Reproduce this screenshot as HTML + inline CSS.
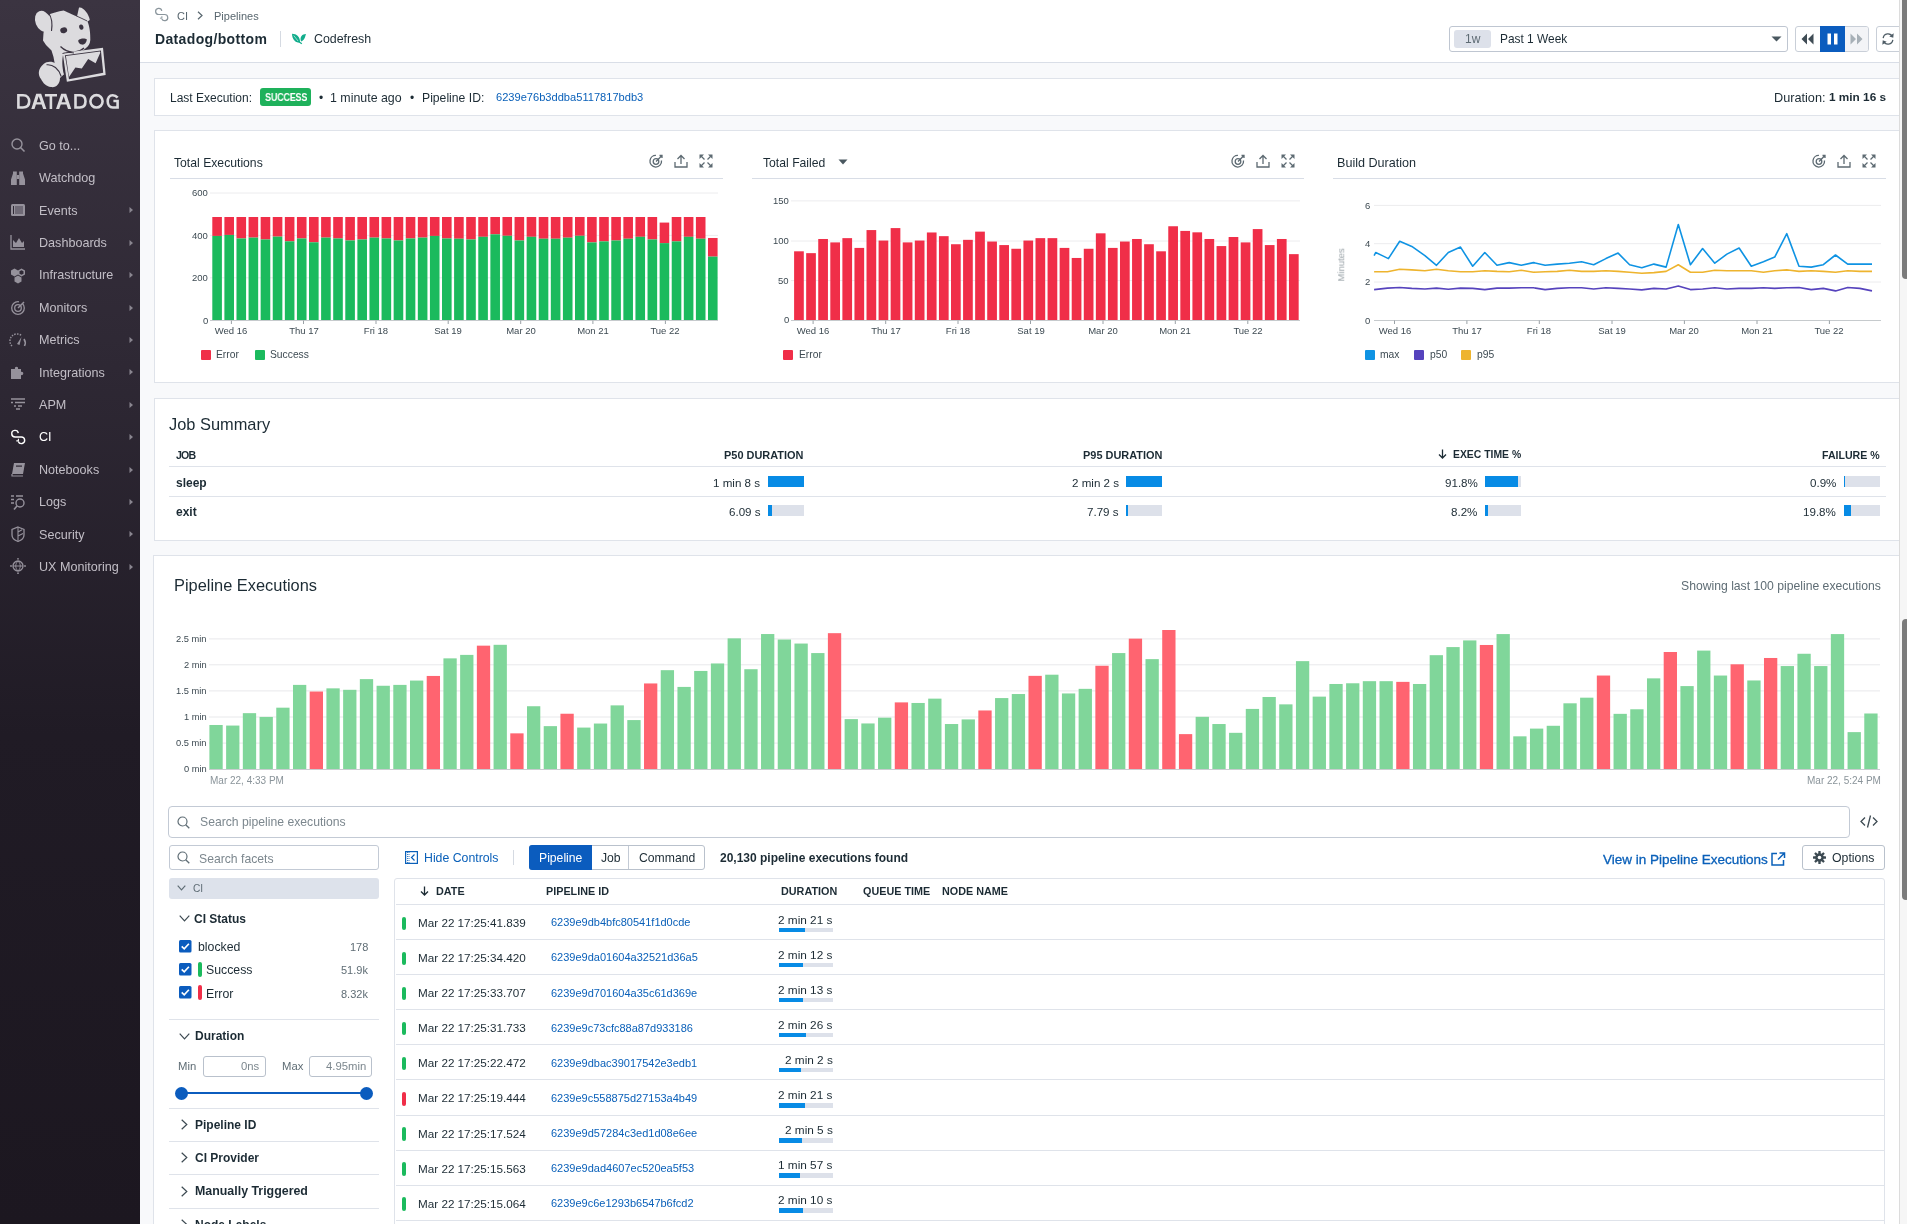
<!DOCTYPE html><html><head><meta charset="utf-8"><style>
*{box-sizing:border-box}
html,body{margin:0;padding:0}
body{width:1907px;height:1224px;overflow:hidden;position:relative;background:#f8f9fb;font-family:"Liberation Sans", sans-serif;color:#1c2b34}
.t{position:absolute;white-space:nowrap;line-height:1;will-change:transform}
svg{position:absolute;overflow:visible}

</style></head><body>
<div style="position:absolute;left:0;top:0;width:140px;height:1224px;background:linear-gradient(180deg,#3b3441 0%,#2e2834 30%,#201b25 60%,#1c1720 100%)"></div>
<svg style="left:0;top:0" width="140" height="120" viewBox="0 0 140 120">
<path fill="#dcdbde" d="M50,14 L55,12.5 L59.5,11.2 L63.7,10.4 L68,12.5 L74.5,15.5 L77,16.5 L79,7.6 C83,6.5 89,14 89.8,20 L87.5,21.5 C89.5,26 90.5,33 90.3,40 C90,44 88.5,46 86,48 C84,50 82,51 80,51.5 L73,54 L63,55 C62,60 62,66 63.8,74.5 L59,77 C57,73 55,66 53.5,57 L51.5,50.5 L47.5,46.5 L46,45 L43,40.5 L43.5,33 L44.5,28 Z"/>
<path d="M76.5,16 C80,17.5 84,19.5 87.2,21" stroke="#3b3441" stroke-width="0.9" fill="none"/>
<ellipse cx="43.2" cy="21.3" rx="7.8" ry="10.8" transform="rotate(-22 43.2 21.3)" fill="#dcdbde"/>
<path d="M48.6,13 C51.5,17 52.5,24 51.5,31" stroke="#3b3441" stroke-width="1.1" fill="none"/>
<path fill="#dcdbde" d="M43.6,64 C47,61 52,61 56,63.5 L59.5,63.7 L63.7,74.4 L60,78 C60,84 56,88 51,87 C46,86.5 43,83 41,79 C38,75 37.5,69 43.6,64 Z"/>
<path d="M46.5,64.8 C53,64 59,69 61.2,76.5" stroke="#3b3441" stroke-width="1.1" fill="none"/>
<ellipse cx="63.7" cy="30.3" rx="3.5" ry="2.9" transform="rotate(-12 63.7 30.3)" fill="#3b3441"/>
<ellipse cx="81.3" cy="27.1" rx="2.1" ry="2.7" transform="rotate(-15 81.3 27.1)" fill="#3b3441"/>
<path d="M78.2,40.4 C80,38.2 85,38 86.8,39.2 C86.6,42.6 84.3,45 82,44.6 C80,44.2 78,42.3 78.2,40.4 Z" fill="#3b3441"/>
<path d="M60.5,46.5 C65,51 70,52.5 75,52 C79,51.5 82,50 84,48" stroke="#3b3441" stroke-width="1.3" fill="none"/>
<path fill="#dcdbde" d="M62.7,53.1 L103,47.8 L105.7,74.9 L66.9,81.8 Z"/>
<path fill="#3b3441" d="M64.9,55.2 L100.9,50.4 L103.2,72.7 L69,79.3 Z"/>
<path fill="#dcdbde" d="M65.9,56.1 L100,51.4 L100.3,52.8 L95.6,63.2 L88.2,59 L81.8,68.5 L75.4,67.5 L69,77 Z"/>
<path d="M62.5,53.5 C66,52.5 70,52 74,53" stroke="#3b3441" stroke-width="1" fill="none"/>
</svg>
<svg style="left:0;top:0" width="140" height="120" viewBox="0 0 140 120"><g fill="none" stroke="#dcdbde" stroke-width="2.6" stroke-linejoin="miter">
<path d="M18.4,95.2 L23,95.2 C27.6,95.2 29.2,98.5 29.2,101.35 C29.2,104.5 27.6,107.5 23,107.5 L18.4,107.5 Z"/>
<path stroke="none" fill="#dcdbde" d="M31.3,109 L36.2,93.7 L41.2,93.7 L46.4,109 L43.2,109 L38.7,96.3 L34.5,109 Z M36.2,102.2 L41.4,102.2 L41.9,104.6 L35.4,104.6 Z"/>
<path d="M44.9,95.2 L57,95.2 M50.9,95.2 L50.9,109"/>
<path stroke="none" fill="#dcdbde" d="M56,109 L61.2,93.7 L66.2,93.7 L71.2,109 L68,109 L63.7,96.3 L59.2,109 Z M61.2,102.2 L66.4,102.2 L66.9,104.6 L60.4,104.6 Z"/>
<path d="M75.5,95.2 L80,95.2 C84.7,95.2 85.5,98.5 85.5,101.35 C85.5,104.5 84.7,107.5 80,107.5 L75.5,107.5 Z"/>
<ellipse cx="96.5" cy="101.35" rx="6.1" ry="6.2"/>
<path d="M117.6,97.6 C116.2,95.9 114.6,95.2 112.7,95.2 C109.4,95.2 107.7,98 107.7,101.35 C107.7,105 109.7,107.5 112.7,107.5 L117.6,107.5 L117.6,101 L113.4,101"/>
</g></svg>
<div class="t " style="left:39.0px;top:139.8px;font-size:12.6px;font-weight:400;color:#c2bec6;">Go to...</div>
<div class="t " style="left:39.0px;top:172.2px;font-size:12.6px;font-weight:400;color:#c2bec6;">Watchdog</div>
<div class="t " style="left:39.0px;top:204.6px;font-size:12.6px;font-weight:400;color:#c2bec6;">Events</div>
<svg style="left:129px;top:206.3px" width="5" height="8"><path d="M0.5,1 L4,4 L0.5,7 Z" fill="#8a8690"/></svg>
<div class="t " style="left:39.0px;top:237.0px;font-size:12.6px;font-weight:400;color:#c2bec6;">Dashboards</div>
<svg style="left:129px;top:238.7px" width="5" height="8"><path d="M0.5,1 L4,4 L0.5,7 Z" fill="#8a8690"/></svg>
<div class="t " style="left:39.0px;top:269.4px;font-size:12.6px;font-weight:400;color:#c2bec6;">Infrastructure</div>
<svg style="left:129px;top:271.1px" width="5" height="8"><path d="M0.5,1 L4,4 L0.5,7 Z" fill="#8a8690"/></svg>
<div class="t " style="left:39.0px;top:301.8px;font-size:12.6px;font-weight:400;color:#c2bec6;">Monitors</div>
<svg style="left:129px;top:303.5px" width="5" height="8"><path d="M0.5,1 L4,4 L0.5,7 Z" fill="#8a8690"/></svg>
<div class="t " style="left:39.0px;top:334.2px;font-size:12.6px;font-weight:400;color:#c2bec6;">Metrics</div>
<svg style="left:129px;top:335.9px" width="5" height="8"><path d="M0.5,1 L4,4 L0.5,7 Z" fill="#8a8690"/></svg>
<div class="t " style="left:39.0px;top:366.6px;font-size:12.6px;font-weight:400;color:#c2bec6;">Integrations</div>
<svg style="left:129px;top:368.3px" width="5" height="8"><path d="M0.5,1 L4,4 L0.5,7 Z" fill="#8a8690"/></svg>
<div class="t " style="left:39.0px;top:399.0px;font-size:12.6px;font-weight:400;color:#c2bec6;">APM</div>
<svg style="left:129px;top:400.7px" width="5" height="8"><path d="M0.5,1 L4,4 L0.5,7 Z" fill="#8a8690"/></svg>
<div class="t " style="left:39.0px;top:431.4px;font-size:12.6px;font-weight:400;color:#ffffff;">CI</div>
<svg style="left:129px;top:433.1px" width="5" height="8"><path d="M0.5,1 L4,4 L0.5,7 Z" fill="#8a8690"/></svg>
<div class="t " style="left:39.0px;top:463.8px;font-size:12.6px;font-weight:400;color:#c2bec6;">Notebooks</div>
<svg style="left:129px;top:465.5px" width="5" height="8"><path d="M0.5,1 L4,4 L0.5,7 Z" fill="#8a8690"/></svg>
<div class="t " style="left:39.0px;top:496.2px;font-size:12.6px;font-weight:400;color:#c2bec6;">Logs</div>
<svg style="left:129px;top:497.9px" width="5" height="8"><path d="M0.5,1 L4,4 L0.5,7 Z" fill="#8a8690"/></svg>
<div class="t " style="left:39.0px;top:528.6px;font-size:12.6px;font-weight:400;color:#c2bec6;">Security</div>
<svg style="left:129px;top:530.3px" width="5" height="8"><path d="M0.5,1 L4,4 L0.5,7 Z" fill="#8a8690"/></svg>
<div class="t " style="left:39.0px;top:561.0px;font-size:12.6px;font-weight:400;color:#c2bec6;">UX Monitoring</div>
<svg style="left:129px;top:562.7px" width="5" height="8"><path d="M0.5,1 L4,4 L0.5,7 Z" fill="#8a8690"/></svg>
<svg style="left:9.5px;top:137.2px" width="16" height="16" viewBox="0 0 16 16"><circle cx="7" cy="7" r="5" fill="none" stroke="#96929c" stroke-width="1.4"/><path d="M10.5,10.5 L14.5,14.5" stroke="#96929c" stroke-width="1.6"/></svg>
<svg style="left:9.5px;top:169.6px" width="16" height="16" viewBox="0 0 16 16"><path d="M1,15 L1,9.5 L3,3.5 L3,1.5 L6.8,1.5 L6.8,15 Z M9.2,15 L9.2,1.5 L13,1.5 L13,3.5 L15,9.5 L15,15 Z" fill="#96929c"/><rect x="6.8" y="5" width="2.4" height="4" fill="#96929c"/></svg>
<svg style="left:9.5px;top:202.0px" width="16" height="16" viewBox="0 0 16 16"><rect x="1" y="2" width="14" height="12" rx="1.5" fill="#96929c"/><rect x="3" y="4" width="1" height="8" fill="#2f2935"/><rect x="5" y="4" width="8" height="8" fill="#6f6a76"/></svg>
<svg style="left:9.5px;top:234.4px" width="16" height="16" viewBox="0 0 16 16"><path d="M1,1 L1,15 L15,15" stroke="#96929c" stroke-width="1.3" fill="none"/><path d="M3,13 L3,6 L6,9 L9,4 L12,9 L14,7 L14,13 Z" fill="#96929c"/></svg>
<svg style="left:9.5px;top:266.8px" width="16" height="16" viewBox="0 0 16 16"><path d="M4.5,1.5 L8,3.5 L8,7.5 L4.5,9.5 L1,7.5 L1,3.5 Z M11.5,1.5 L15,3.5 L15,7.5 L11.5,9.5 L8,7.5 L8,3.5 Z" fill="#96929c"/><path d="M11.5,3.2 L13.5,4.3 L13.5,6.7 L11.5,7.8 L9.5,6.7 L9.5,4.3 Z" fill="#2f2935"/><path d="M8,8.5 L11.5,10.5 L11.5,14.5 L8,16.5 L4.5,14.5 L4.5,10.5 Z" fill="#96929c"/></svg>
<svg style="left:9.5px;top:299.2px" width="16" height="16" viewBox="0 0 16 16"><circle cx="8" cy="9" r="6.3" fill="none" stroke="#96929c" stroke-width="1.3" stroke-dasharray="30 4"/><circle cx="8" cy="9" r="3.3" fill="none" stroke="#96929c" stroke-width="1.3"/><path d="M8,9 L14,3" stroke="#96929c" stroke-width="1.4"/></svg>
<svg style="left:9.5px;top:331.6px" width="16" height="16" viewBox="0 0 16 16"><path d="M2,14 A7,7 0 0 1 12,4" fill="none" stroke="#96929c" stroke-width="1.4" stroke-dasharray="1.5 1.2"/><path d="M14,7 A7,7 0 0 1 14.5,14" fill="none" stroke="#96929c" stroke-width="1.6"/><path d="M7,12 L11.5,5 L9.5,13 Z" fill="#96929c"/></svg>
<svg style="left:9.5px;top:364.0px" width="16" height="16" viewBox="0 0 16 16"><path d="M1,5 L5,5 C4,2 9,2 8,5 L11,5 L11,8 C14,7 14,12 11,11 L11,15 L1,15 Z" fill="#96929c"/></svg>
<svg style="left:9.5px;top:396.4px" width="16" height="16" viewBox="0 0 16 16"><path d="M1,3 L15,3 M1,6.5 L3,6.5 M5,6.5 L15,6.5 M4,10 L6,10 M8,10 L12,10 M6,13 L10,13" stroke="#96929c" stroke-width="1.3"/></svg>
<svg style="left:9.5px;top:428.8px" width="16" height="16" viewBox="0 0 16 16"><path d="M8.3,4.2 A3.3,3.3 0 1 0 5.1,8 L11.4,8 A3.3,3.3 0 1 1 8.3,12.5" stroke="#ffffff" stroke-width="1.4" fill="none"/><path d="M6.3,11.9 L8.4,11.9 L8.4,9.8" stroke="#ffffff" stroke-width="1.1" fill="none"/></svg>
<svg style="left:9.5px;top:461.2px" width="16" height="16" viewBox="0 0 16 16"><path d="M4,2 L15,2 L13,13 L2,13 Z" fill="#96929c"/><path d="M2,13 L2,15 L13,15" stroke="#96929c" stroke-width="1.2" fill="none"/><rect x="6" y="4.5" width="6" height="1.2" fill="#2a2430"/></svg>
<svg style="left:9.5px;top:493.6px" width="16" height="16" viewBox="0 0 16 16"><path d="M1,2 L4,2 M6,2 L13,2 M1,5.5 L4,5.5 M1,9 L4,9" stroke="#96929c" stroke-width="1.3"/><circle cx="10" cy="9" r="4" fill="none" stroke="#96929c" stroke-width="1.4"/><path d="M7,12 L4,15.5" stroke="#96929c" stroke-width="1.6"/></svg>
<svg style="left:9.5px;top:526.0px" width="16" height="16" viewBox="0 0 16 16"><path d="M8,1 L14,3.5 L14,9 C14,12 11,14.5 8,15.5 C5,14.5 2,12 2,9 L2,3.5 Z" fill="none" stroke="#96929c" stroke-width="1.3"/><path d="M8,1 L8,15.5 M8,6 L12,3.8 M8,10 L13,7.5" stroke="#96929c" stroke-width="1.1"/></svg>
<svg style="left:9.5px;top:558.4px" width="16" height="16" viewBox="0 0 16 16"><circle cx="8" cy="8" r="5" fill="none" stroke="#96929c" stroke-width="1.3"/><path d="M3,8 L13,8 M8,3 C5,6 5,10 8,13 C11,10 11,6 8,3" stroke="#96929c" stroke-width="1" fill="none"/><circle cx="8" cy="0.8" r="0.9" fill="#96929c"/><circle cx="8" cy="15.2" r="0.9" fill="#96929c"/><circle cx="1" cy="8" r="0.9" fill="#96929c"/><circle cx="15" cy="8" r="0.9" fill="#96929c"/></svg>
<div style="position:absolute;left:140px;top:0px;width:1759px;height:63px;background:#fff;border-bottom:1px solid #d9dee7"></div>
<svg style="left:154px;top:7px" width="15" height="15" viewBox="0 0 16 16"><path d="M8.3,4.2 A3.3,3.3 0 1 0 5.1,8 L11.4,8 A3.3,3.3 0 1 1 8.3,12.5" stroke="#8a959c" stroke-width="1.3" fill="none"/><path d="M6.3,11.9 L8.4,11.9 L8.4,9.8" stroke="#8a959c" stroke-width="1" fill="none"/></svg>
<div class="t " style="left:176.5px;top:10.9px;font-size:11px;font-weight:400;color:#58666e;">CI</div>
<svg style="left:197px;top:11px" width="7" height="9"><path d="M1,0.8 L5,4.5 L1,8.2" stroke="#58666e" stroke-width="1.2" fill="none"/></svg>
<div class="t " style="left:213.5px;top:10.9px;font-size:11px;font-weight:400;color:#58666e;">Pipelines</div>
<div class="t " style="left:155.0px;top:32.0px;font-size:14px;font-weight:700;color:#1c2b34;letter-spacing:0.35px">Datadog/bottom</div>
<div style="position:absolute;left:280px;top:31px;width:1px;height:16px;background:#d5dae2"></div>
<svg style="left:288px;top:29px" width="22" height="20" viewBox="0 0 22 20"><path d="M4,4.8 C8.5,4.8 12.3,8 12,13.6 C7.5,14 4.2,10.5 4,4.8 Z" fill="#12ad8c"/><path d="M5.8,6.6 L10,12" stroke="#fff" stroke-width="0.7" opacity="0.8"/><path d="M11.3,13 L13.8,14.8" stroke="#12ad8c" stroke-width="1.3"/><path d="M18,5.1 C14.2,5.1 11.6,7.8 13,12.5 C16.4,11.6 17.1,8 18,5.1 Z" fill="#12ad8c"/></svg>
<div class="t " style="left:313.5px;top:33.4px;font-size:12.4px;font-weight:400;color:#1c2b34;">Codefresh</div>
<div style="position:absolute;left:1449px;top:26px;width:339px;height:26px;background:#fff;border:1px solid #bfc6d1;border-radius:3px"></div>
<div style="position:absolute;left:1453.5px;top:30px;width:37px;height:18px;background:#dde1ea;border-radius:3px"></div>
<div class="t " style="left:1465.0px;top:33.3px;font-size:12px;font-weight:400;color:#5e6b74;">1w</div>
<div class="t " style="left:1500.0px;top:33.9px;font-size:11.9px;font-weight:400;color:#1c2b34;">Past 1 Week</div>
<svg style="left:1771px;top:36px" width="11" height="6"><path d="M0.5,0.5 L10.5,0.5 L5.5,5.5 Z" fill="#4a5860"/></svg>
<div style="position:absolute;left:1795px;top:26px;width:74px;height:26px;background:#fff;border:1px solid #c9cfd8;border-radius:3px"></div>
<div style="position:absolute;left:1844px;top:27px;width:24px;height:24px;background:#f3f4f7;border-radius:0 2px 2px 0"></div>
<div style="position:absolute;left:1820px;top:26px;width:25px;height:26px;background:#0b5cbe"></div>
<svg style="left:1801px;top:33px" width="13" height="12" viewBox="0 0 13 12"><path d="M6,0.5 L0.5,6 L6,11.5 Z M12.5,0.5 L7,6 L12.5,11.5 Z" fill="#3f4c55"/></svg>
<svg style="left:1826px;top:33px" width="13" height="12" viewBox="0 0 13 12"><rect x="1.5" y="0.5" width="3.5" height="11" fill="#fff"/><rect x="8" y="0.5" width="3.5" height="11" fill="#fff"/></svg>
<svg style="left:1850px;top:33px" width="13" height="12" viewBox="0 0 13 12"><path d="M0.5,0.5 L6,6 L0.5,11.5 Z M7,0.5 L12.5,6 L7,11.5 Z" fill="#a7b0b7"/></svg>
<div style="position:absolute;left:1876px;top:26px;width:30px;height:26px;background:#fff;border:1px solid #c9cfd8;border-radius:3px"></div>
<svg style="left:1881px;top:32px" width="14" height="14" viewBox="0 0 16 16"><path d="M2.5,7 A5.5,5.5 0 0 1 13,5.5 M13.5,9 A5.5,5.5 0 0 1 3,10.5" stroke="#4f5d66" stroke-width="1.5" fill="none"/><path d="M14.5,1.5 L14,6.5 L9.5,5 Z M1.5,14.5 L2,9.5 L6.5,11 Z" fill="#4f5d66"/></svg>
<div style="position:absolute;left:154px;top:78px;width:1746px;height:38px;background:#fff;border:1px solid #dfe3ea"></div>
<div class="t " style="left:170.0px;top:92.1px;font-size:12px;font-weight:400;color:#1c2b34;">Last Execution:</div>
<div style="position:absolute;left:260px;top:88px;width:51px;height:17.5px;background:#1eb15b;border-radius:3px"></div>
<div class="t " style="left:264.8px;top:92.1px;font-size:10.8px;font-weight:700;color:#fff;letter-spacing:-0.3px;transform:scaleX(0.84);transform-origin:0 0">SUCCESS</div>
<div class="t " style="left:318.5px;top:92.1px;font-size:12px;font-weight:400;color:#1c2b34;">&bull;</div>
<div class="t " style="left:330.2px;top:91.8px;font-size:12.4px;font-weight:400;color:#1c2b34;">1 minute ago</div>
<div class="t " style="left:409.5px;top:92.1px;font-size:12px;font-weight:400;color:#1c2b34;">&bull;</div>
<div class="t " style="left:421.5px;top:92.0px;font-size:12.2px;font-weight:400;color:#1c2b34;">Pipeline ID:</div>
<div class="t " style="left:496.0px;top:92.1px;font-size:11.1px;font-weight:400;color:#0a60b9;">6239e76b3ddba5117817bdb3</div>
<div class="t " style="left:1773.6px;top:91.5px;font-size:12.7px;font-weight:400;color:#1c2b34;">Duration:</div>
<div class="t " style="right:21.0px;top:92.3px;font-size:11.8px;font-weight:700;color:#1c2b34;">1 min 16 s</div>
<div style="position:absolute;left:154px;top:130px;width:1746px;height:253px;background:#fff;border:1px solid #dfe3ea"></div>
<div style="position:absolute;left:154px;top:398px;width:1746px;height:143px;background:#fff;border:1px solid #dfe3ea"></div>
<div style="position:absolute;left:153px;top:555px;width:1747px;height:700px;background:#fff;border:1px solid #dfe3ea"></div>
<div class="t " style="left:173.5px;top:157.3px;font-size:12.2px;font-weight:400;color:#1c2b34;">Total Executions</div>
<div style="position:absolute;left:170px;top:178px;width:553px;height:1px;background:#d8dde6"></div>
<svg style="left:649.3px;top:154px" width="15" height="15" viewBox="0 0 15 15"><path d="M12.5,6.5 A5.8,5.8 0 1 1 8.5,1.7" fill="none" stroke="#5d6a72" stroke-width="1.3" stroke-dasharray="28 2"/><circle cx="7" cy="7.5" r="2.8" fill="none" stroke="#5d6a72" stroke-width="1.3"/><path d="M7,7.5 L13,1.5 M10.5,1.5 L13,1.5 L13,4" stroke="#5d6a72" stroke-width="1.3" fill="none"/></svg>
<svg style="left:674px;top:154px" width="14" height="14" viewBox="0 0 14 14"><path d="M1,8 L1,13 L13,13 L13,8" stroke="#5d6a72" stroke-width="1.3" fill="none"/><path d="M7,10 L7,1.5 M3.5,5 L7,1.5 L10.5,5" stroke="#5d6a72" stroke-width="1.3" fill="none"/></svg>
<svg style="left:699px;top:154px" width="14" height="14" viewBox="0 0 14 14"><g fill="#5d6a72"><path d="M0.5,0.5 L5,0.5 L0.5,5 Z"/><path d="M13.5,0.5 L9,0.5 L13.5,5 Z"/><path d="M0.5,13.5 L5,13.5 L0.5,9 Z"/><path d="M13.5,13.5 L9,13.5 L13.5,9 Z"/></g><path d="M2,2 L5.5,5.5 M12,2 L8.5,5.5 M2,12 L5.5,8.5 M12,12 L8.5,8.5" stroke="#5d6a72" stroke-width="1.3"/></svg>
<svg style="left:0;top:0" width="1907" height="400"><line x1="210" y1="193.0" x2="718" y2="193.0" stroke="#ececee" stroke-width="1"/><line x1="210" y1="235.4" x2="718" y2="235.4" stroke="#ececee" stroke-width="1"/><line x1="210" y1="277.8" x2="718" y2="277.8" stroke="#ececee" stroke-width="1"/><rect x="212.30" y="217.00" width="9.6" height="18.93" fill="#f02e48"/><rect x="212.30" y="235.93" width="9.6" height="84.27" fill="#1bba5d"/><rect x="224.39" y="217.00" width="9.6" height="17.93" fill="#f02e48"/><rect x="224.39" y="234.93" width="9.6" height="85.27" fill="#1bba5d"/><rect x="236.48" y="217.00" width="9.6" height="21.47" fill="#f02e48"/><rect x="236.48" y="238.47" width="9.6" height="81.73" fill="#1bba5d"/><rect x="248.57" y="217.00" width="9.6" height="20.62" fill="#f02e48"/><rect x="248.57" y="237.62" width="9.6" height="82.58" fill="#1bba5d"/><rect x="260.66" y="217.00" width="9.6" height="22.46" fill="#f02e48"/><rect x="260.66" y="239.46" width="9.6" height="80.74" fill="#1bba5d"/><rect x="272.75" y="217.00" width="9.6" height="19.63" fill="#f02e48"/><rect x="272.75" y="236.63" width="9.6" height="83.57" fill="#1bba5d"/><rect x="284.84" y="217.00" width="9.6" height="24.31" fill="#f02e48"/><rect x="284.84" y="241.31" width="9.6" height="78.89" fill="#1bba5d"/><rect x="296.93" y="217.00" width="9.6" height="21.47" fill="#f02e48"/><rect x="296.93" y="238.47" width="9.6" height="81.73" fill="#1bba5d"/><rect x="309.02" y="217.00" width="9.6" height="25.30" fill="#f02e48"/><rect x="309.02" y="242.30" width="9.6" height="77.90" fill="#1bba5d"/><rect x="321.11" y="217.00" width="9.6" height="20.62" fill="#f02e48"/><rect x="321.11" y="237.62" width="9.6" height="82.58" fill="#1bba5d"/><rect x="333.20" y="217.00" width="9.6" height="21.47" fill="#f02e48"/><rect x="333.20" y="238.47" width="9.6" height="81.73" fill="#1bba5d"/><rect x="345.29" y="217.00" width="9.6" height="23.46" fill="#f02e48"/><rect x="345.29" y="240.46" width="9.6" height="79.74" fill="#1bba5d"/><rect x="357.38" y="217.00" width="9.6" height="22.46" fill="#f02e48"/><rect x="357.38" y="239.46" width="9.6" height="80.74" fill="#1bba5d"/><rect x="369.47" y="217.00" width="9.6" height="20.62" fill="#f02e48"/><rect x="369.47" y="237.62" width="9.6" height="82.58" fill="#1bba5d"/><rect x="381.56" y="217.00" width="9.6" height="21.47" fill="#f02e48"/><rect x="381.56" y="238.47" width="9.6" height="81.73" fill="#1bba5d"/><rect x="393.65" y="217.00" width="9.6" height="23.46" fill="#f02e48"/><rect x="393.65" y="240.46" width="9.6" height="79.74" fill="#1bba5d"/><rect x="405.74" y="217.00" width="9.6" height="21.47" fill="#f02e48"/><rect x="405.74" y="238.47" width="9.6" height="81.73" fill="#1bba5d"/><rect x="417.83" y="217.00" width="9.6" height="20.62" fill="#f02e48"/><rect x="417.83" y="237.62" width="9.6" height="82.58" fill="#1bba5d"/><rect x="429.92" y="217.00" width="9.6" height="18.93" fill="#f02e48"/><rect x="429.92" y="235.93" width="9.6" height="84.27" fill="#1bba5d"/><rect x="442.01" y="217.00" width="9.6" height="21.47" fill="#f02e48"/><rect x="442.01" y="238.47" width="9.6" height="81.73" fill="#1bba5d"/><rect x="454.10" y="217.00" width="9.6" height="21.73" fill="#f02e48"/><rect x="454.10" y="238.73" width="9.6" height="81.47" fill="#1bba5d"/><rect x="466.19" y="217.00" width="9.6" height="22.46" fill="#f02e48"/><rect x="466.19" y="239.46" width="9.6" height="80.74" fill="#1bba5d"/><rect x="478.28" y="217.00" width="9.6" height="19.82" fill="#f02e48"/><rect x="478.28" y="236.82" width="9.6" height="83.38" fill="#1bba5d"/><rect x="490.37" y="217.00" width="9.6" height="17.32" fill="#f02e48"/><rect x="490.37" y="234.32" width="9.6" height="85.88" fill="#1bba5d"/><rect x="502.46" y="217.00" width="9.6" height="18.79" fill="#f02e48"/><rect x="502.46" y="235.79" width="9.6" height="84.41" fill="#1bba5d"/><rect x="514.55" y="217.00" width="9.6" height="23.49" fill="#f02e48"/><rect x="514.55" y="240.49" width="9.6" height="79.71" fill="#1bba5d"/><rect x="526.64" y="217.00" width="9.6" height="19.82" fill="#f02e48"/><rect x="526.64" y="236.82" width="9.6" height="83.38" fill="#1bba5d"/><rect x="538.73" y="217.00" width="9.6" height="21.73" fill="#f02e48"/><rect x="538.73" y="238.73" width="9.6" height="81.47" fill="#1bba5d"/><rect x="550.82" y="217.00" width="9.6" height="21.73" fill="#f02e48"/><rect x="550.82" y="238.73" width="9.6" height="81.47" fill="#1bba5d"/><rect x="562.91" y="217.00" width="9.6" height="20.70" fill="#f02e48"/><rect x="562.91" y="237.70" width="9.6" height="82.50" fill="#1bba5d"/><rect x="575.00" y="217.00" width="9.6" height="18.79" fill="#f02e48"/><rect x="575.00" y="235.79" width="9.6" height="84.41" fill="#1bba5d"/><rect x="587.09" y="217.00" width="9.6" height="25.40" fill="#f02e48"/><rect x="587.09" y="242.40" width="9.6" height="77.80" fill="#1bba5d"/><rect x="599.18" y="217.00" width="9.6" height="24.37" fill="#f02e48"/><rect x="599.18" y="241.37" width="9.6" height="78.83" fill="#1bba5d"/><rect x="611.27" y="217.00" width="9.6" height="23.49" fill="#f02e48"/><rect x="611.27" y="240.49" width="9.6" height="79.71" fill="#1bba5d"/><rect x="623.36" y="217.00" width="9.6" height="21.73" fill="#f02e48"/><rect x="623.36" y="238.73" width="9.6" height="81.47" fill="#1bba5d"/><rect x="635.45" y="217.00" width="9.6" height="19.82" fill="#f02e48"/><rect x="635.45" y="236.82" width="9.6" height="83.38" fill="#1bba5d"/><rect x="647.54" y="217.00" width="9.6" height="22.46" fill="#f02e48"/><rect x="647.54" y="239.46" width="9.6" height="80.74" fill="#1bba5d"/><rect x="659.63" y="222.58" width="9.6" height="20.55" fill="#f02e48"/><rect x="659.63" y="243.13" width="9.6" height="77.07" fill="#1bba5d"/><rect x="671.72" y="217.00" width="9.6" height="24.37" fill="#f02e48"/><rect x="671.72" y="241.37" width="9.6" height="78.83" fill="#1bba5d"/><rect x="683.81" y="217.00" width="9.6" height="19.82" fill="#f02e48"/><rect x="683.81" y="236.82" width="9.6" height="83.38" fill="#1bba5d"/><rect x="695.90" y="217.00" width="9.6" height="21.73" fill="#f02e48"/><rect x="695.90" y="238.73" width="9.6" height="81.47" fill="#1bba5d"/><rect x="707.99" y="237.99" width="9.6" height="18.65" fill="#f02e48"/><rect x="707.99" y="256.64" width="9.6" height="63.56" fill="#1bba5d"/><line x1="210" y1="320.5" x2="718" y2="320.5" stroke="#c6cacd" stroke-width="1"/><line x1="231.4" y1="320.5" x2="231.4" y2="324" stroke="#9aa1a6" stroke-width="1"/><line x1="303.5" y1="320.5" x2="303.5" y2="324" stroke="#9aa1a6" stroke-width="1"/><line x1="376" y1="320.5" x2="376" y2="324" stroke="#9aa1a6" stroke-width="1"/><line x1="448.2" y1="320.5" x2="448.2" y2="324" stroke="#9aa1a6" stroke-width="1"/><line x1="520.7" y1="320.5" x2="520.7" y2="324" stroke="#9aa1a6" stroke-width="1"/><line x1="592.9" y1="320.5" x2="592.9" y2="324" stroke="#9aa1a6" stroke-width="1"/><line x1="665.4" y1="320.5" x2="665.4" y2="324" stroke="#9aa1a6" stroke-width="1"/></svg>
<div class="t " style="right:1698.8px;top:188.4px;font-size:9.5px;font-weight:400;color:#3d4a52;">600</div>
<div class="t " style="right:1698.8px;top:230.8px;font-size:9.5px;font-weight:400;color:#3d4a52;">400</div>
<div class="t " style="right:1698.8px;top:273.2px;font-size:9.5px;font-weight:400;color:#3d4a52;">200</div>
<div class="t " style="right:1698.8px;top:315.6px;font-size:9.5px;font-weight:400;color:#3d4a52;">0</div>
<div class="t" style="left:191.4px;width:80px;text-align:center;top:326.0px;font-size:9.5px;color:#3d4a52">Wed 16</div>
<div class="t" style="left:263.5px;width:80px;text-align:center;top:326.0px;font-size:9.5px;color:#3d4a52">Thu 17</div>
<div class="t" style="left:336px;width:80px;text-align:center;top:326.0px;font-size:9.5px;color:#3d4a52">Fri 18</div>
<div class="t" style="left:408.2px;width:80px;text-align:center;top:326.0px;font-size:9.5px;color:#3d4a52">Sat 19</div>
<div class="t" style="left:480.70000000000005px;width:80px;text-align:center;top:326.0px;font-size:9.5px;color:#3d4a52">Mar 20</div>
<div class="t" style="left:552.9px;width:80px;text-align:center;top:326.0px;font-size:9.5px;color:#3d4a52">Mon 21</div>
<div class="t" style="left:625.4px;width:80px;text-align:center;top:326.0px;font-size:9.5px;color:#3d4a52">Tue 22</div>
<div style="position:absolute;left:201px;top:350px;width:10px;height:9.5px;background:#f02e48;border-radius:1px"></div>
<div class="t " style="left:216.4px;top:349.7px;font-size:10.3px;font-weight:400;color:#3d4a52;">Error</div>
<div style="position:absolute;left:255.4px;top:350px;width:10px;height:9.5px;background:#1bba5d;border-radius:1px"></div>
<div class="t " style="left:269.7px;top:349.7px;font-size:10.3px;font-weight:400;color:#3d4a52;">Success</div>
<div class="t " style="left:763.0px;top:157.3px;font-size:12.2px;font-weight:400;color:#1c2b34;">Total Failed</div>
<div style="position:absolute;left:752px;top:178px;width:552px;height:1px;background:#d8dde6"></div>
<svg style="left:838px;top:159px" width="10" height="6"><path d="M0.5,0.5 L9.5,0.5 L5,5.5 Z" fill="#4a5860"/></svg>
<svg style="left:1231.3px;top:154px" width="15" height="15" viewBox="0 0 15 15"><path d="M12.5,6.5 A5.8,5.8 0 1 1 8.5,1.7" fill="none" stroke="#5d6a72" stroke-width="1.3" stroke-dasharray="28 2"/><circle cx="7" cy="7.5" r="2.8" fill="none" stroke="#5d6a72" stroke-width="1.3"/><path d="M7,7.5 L13,1.5 M10.5,1.5 L13,1.5 L13,4" stroke="#5d6a72" stroke-width="1.3" fill="none"/></svg>
<svg style="left:1256px;top:154px" width="14" height="14" viewBox="0 0 14 14"><path d="M1,8 L1,13 L13,13 L13,8" stroke="#5d6a72" stroke-width="1.3" fill="none"/><path d="M7,10 L7,1.5 M3.5,5 L7,1.5 L10.5,5" stroke="#5d6a72" stroke-width="1.3" fill="none"/></svg>
<svg style="left:1281px;top:154px" width="14" height="14" viewBox="0 0 14 14"><g fill="#5d6a72"><path d="M0.5,0.5 L5,0.5 L0.5,5 Z"/><path d="M13.5,0.5 L9,0.5 L13.5,5 Z"/><path d="M0.5,13.5 L5,13.5 L0.5,9 Z"/><path d="M13.5,13.5 L9,13.5 L13.5,9 Z"/></g><path d="M2,2 L5.5,5.5 M12,2 L8.5,5.5 M2,12 L5.5,8.5 M12,12 L8.5,8.5" stroke="#5d6a72" stroke-width="1.3"/></svg>
<svg style="left:0;top:0" width="1907" height="400"><line x1="791" y1="200.9" x2="1300" y2="200.9" stroke="#ececee" stroke-width="1"/><line x1="791" y1="241.0" x2="1300" y2="241.0" stroke="#ececee" stroke-width="1"/><line x1="791" y1="280.6" x2="1300" y2="280.6" stroke="#ececee" stroke-width="1"/><rect x="794.10" y="251.31" width="9.7" height="68.69" fill="#f02e48"/><rect x="806.17" y="253.15" width="9.7" height="66.85" fill="#f02e48"/><rect x="818.24" y="238.99" width="9.7" height="81.01" fill="#f02e48"/><rect x="830.31" y="242.39" width="9.7" height="77.61" fill="#f02e48"/><rect x="842.38" y="238.14" width="9.7" height="81.86" fill="#f02e48"/><rect x="854.45" y="247.91" width="9.7" height="72.09" fill="#f02e48"/><rect x="866.52" y="230.07" width="9.7" height="89.93" fill="#f02e48"/><rect x="878.59" y="240.55" width="9.7" height="79.45" fill="#f02e48"/><rect x="890.66" y="228.09" width="9.7" height="91.91" fill="#f02e48"/><rect x="902.73" y="242.39" width="9.7" height="77.61" fill="#f02e48"/><rect x="914.80" y="240.55" width="9.7" height="79.45" fill="#f02e48"/><rect x="926.87" y="232.47" width="9.7" height="87.53" fill="#f02e48"/><rect x="938.94" y="236.16" width="9.7" height="83.84" fill="#f02e48"/><rect x="951.01" y="244.23" width="9.7" height="75.77" fill="#f02e48"/><rect x="963.08" y="239.84" width="9.7" height="80.16" fill="#f02e48"/><rect x="975.15" y="231.63" width="9.7" height="88.37" fill="#f02e48"/><rect x="987.22" y="241.54" width="9.7" height="78.46" fill="#f02e48"/><rect x="999.29" y="245.08" width="9.7" height="74.92" fill="#f02e48"/><rect x="1011.36" y="248.76" width="9.7" height="71.24" fill="#f02e48"/><rect x="1023.43" y="240.55" width="9.7" height="79.45" fill="#f02e48"/><rect x="1035.50" y="238.14" width="9.7" height="81.86" fill="#f02e48"/><rect x="1047.57" y="238.14" width="9.7" height="81.86" fill="#f02e48"/><rect x="1059.64" y="247.91" width="9.7" height="72.09" fill="#f02e48"/><rect x="1071.71" y="257.96" width="9.7" height="62.04" fill="#f02e48"/><rect x="1083.78" y="248.76" width="9.7" height="71.24" fill="#f02e48"/><rect x="1095.85" y="233.32" width="9.7" height="86.68" fill="#f02e48"/><rect x="1107.92" y="247.91" width="9.7" height="72.09" fill="#f02e48"/><rect x="1119.99" y="241.54" width="9.7" height="78.46" fill="#f02e48"/><rect x="1132.06" y="238.99" width="9.7" height="81.01" fill="#f02e48"/><rect x="1144.13" y="244.23" width="9.7" height="75.77" fill="#f02e48"/><rect x="1156.20" y="251.31" width="9.7" height="68.69" fill="#f02e48"/><rect x="1168.27" y="226.25" width="9.7" height="93.75" fill="#f02e48"/><rect x="1180.34" y="230.92" width="9.7" height="89.08" fill="#f02e48"/><rect x="1192.41" y="232.33" width="9.7" height="87.67" fill="#f02e48"/><rect x="1204.48" y="238.99" width="9.7" height="81.01" fill="#f02e48"/><rect x="1216.55" y="246.07" width="9.7" height="73.93" fill="#f02e48"/><rect x="1228.62" y="237.01" width="9.7" height="82.99" fill="#f02e48"/><rect x="1240.69" y="242.39" width="9.7" height="77.61" fill="#f02e48"/><rect x="1252.76" y="229.08" width="9.7" height="90.92" fill="#f02e48"/><rect x="1264.83" y="245.08" width="9.7" height="74.92" fill="#f02e48"/><rect x="1276.90" y="238.99" width="9.7" height="81.01" fill="#f02e48"/><rect x="1288.97" y="254.14" width="9.7" height="65.86" fill="#f02e48"/><line x1="791" y1="320.5" x2="1300" y2="320.5" stroke="#c6cacd" stroke-width="1"/><line x1="813.1" y1="320.5" x2="813.1" y2="324" stroke="#9aa1a6" stroke-width="1"/><line x1="885.7" y1="320.5" x2="885.7" y2="324" stroke="#9aa1a6" stroke-width="1"/><line x1="958" y1="320.5" x2="958" y2="324" stroke="#9aa1a6" stroke-width="1"/><line x1="1030.5" y1="320.5" x2="1030.5" y2="324" stroke="#9aa1a6" stroke-width="1"/><line x1="1103" y1="320.5" x2="1103" y2="324" stroke="#9aa1a6" stroke-width="1"/><line x1="1175.3" y1="320.5" x2="1175.3" y2="324" stroke="#9aa1a6" stroke-width="1"/><line x1="1247.8" y1="320.5" x2="1247.8" y2="324" stroke="#9aa1a6" stroke-width="1"/></svg>
<div class="t " style="right:1118.0px;top:196.3px;font-size:9.5px;font-weight:400;color:#3d4a52;">150</div>
<div class="t " style="right:1118.0px;top:236.4px;font-size:9.5px;font-weight:400;color:#3d4a52;">100</div>
<div class="t " style="right:1118.0px;top:276.0px;font-size:9.5px;font-weight:400;color:#3d4a52;">50</div>
<div class="t " style="right:1118.0px;top:315.4px;font-size:9.5px;font-weight:400;color:#3d4a52;">0</div>
<div class="t" style="left:773.1px;width:80px;text-align:center;top:326.0px;font-size:9.5px;color:#3d4a52">Wed 16</div>
<div class="t" style="left:845.7px;width:80px;text-align:center;top:326.0px;font-size:9.5px;color:#3d4a52">Thu 17</div>
<div class="t" style="left:918px;width:80px;text-align:center;top:326.0px;font-size:9.5px;color:#3d4a52">Fri 18</div>
<div class="t" style="left:990.5px;width:80px;text-align:center;top:326.0px;font-size:9.5px;color:#3d4a52">Sat 19</div>
<div class="t" style="left:1063px;width:80px;text-align:center;top:326.0px;font-size:9.5px;color:#3d4a52">Mar 20</div>
<div class="t" style="left:1135.3px;width:80px;text-align:center;top:326.0px;font-size:9.5px;color:#3d4a52">Mon 21</div>
<div class="t" style="left:1207.8px;width:80px;text-align:center;top:326.0px;font-size:9.5px;color:#3d4a52">Tue 22</div>
<div style="position:absolute;left:783.2px;top:350px;width:10px;height:9.5px;background:#f02e48;border-radius:1px"></div>
<div class="t " style="left:798.5px;top:349.7px;font-size:10.3px;font-weight:400;color:#3d4a52;">Error</div>
<div class="t " style="left:1337.0px;top:156.9px;font-size:12.6px;font-weight:400;color:#1c2b34;">Build Duration</div>
<div style="position:absolute;left:1333px;top:178px;width:553px;height:1px;background:#d8dde6"></div>
<svg style="left:1812.3px;top:154px" width="15" height="15" viewBox="0 0 15 15"><path d="M12.5,6.5 A5.8,5.8 0 1 1 8.5,1.7" fill="none" stroke="#5d6a72" stroke-width="1.3" stroke-dasharray="28 2"/><circle cx="7" cy="7.5" r="2.8" fill="none" stroke="#5d6a72" stroke-width="1.3"/><path d="M7,7.5 L13,1.5 M10.5,1.5 L13,1.5 L13,4" stroke="#5d6a72" stroke-width="1.3" fill="none"/></svg>
<svg style="left:1837px;top:154px" width="14" height="14" viewBox="0 0 14 14"><path d="M1,8 L1,13 L13,13 L13,8" stroke="#5d6a72" stroke-width="1.3" fill="none"/><path d="M7,10 L7,1.5 M3.5,5 L7,1.5 L10.5,5" stroke="#5d6a72" stroke-width="1.3" fill="none"/></svg>
<svg style="left:1862px;top:154px" width="14" height="14" viewBox="0 0 14 14"><g fill="#5d6a72"><path d="M0.5,0.5 L5,0.5 L0.5,5 Z"/><path d="M13.5,0.5 L9,0.5 L13.5,5 Z"/><path d="M0.5,13.5 L5,13.5 L0.5,9 Z"/><path d="M13.5,13.5 L9,13.5 L13.5,9 Z"/></g><path d="M2,2 L5.5,5.5 M12,2 L8.5,5.5 M2,12 L5.5,8.5 M12,12 L8.5,8.5" stroke="#5d6a72" stroke-width="1.3"/></svg>
<svg style="left:0;top:0" width="1907" height="400"><line x1="1374" y1="205.4" x2="1881" y2="205.4" stroke="#ececee" stroke-width="1"/><line x1="1374" y1="243.7" x2="1881" y2="243.7" stroke="#ececee" stroke-width="1"/><line x1="1374" y1="282.0" x2="1881" y2="282.0" stroke="#ececee" stroke-width="1"/><line x1="1374" y1="320.5" x2="1881" y2="320.5" stroke="#c6cacd" stroke-width="1"/><line x1="1394.5" y1="320.5" x2="1394.5" y2="324" stroke="#9aa1a6" stroke-width="1"/><line x1="1466.9" y1="320.5" x2="1466.9" y2="324" stroke="#9aa1a6" stroke-width="1"/><line x1="1539.3" y1="320.5" x2="1539.3" y2="324" stroke="#9aa1a6" stroke-width="1"/><line x1="1612" y1="320.5" x2="1612" y2="324" stroke="#9aa1a6" stroke-width="1"/><line x1="1684.4" y1="320.5" x2="1684.4" y2="324" stroke="#9aa1a6" stroke-width="1"/><line x1="1757" y1="320.5" x2="1757" y2="324" stroke="#9aa1a6" stroke-width="1"/><line x1="1829.4" y1="320.5" x2="1829.4" y2="324" stroke="#9aa1a6" stroke-width="1"/><polyline points="1374.1,289.6 1387.5,288.1 1399.7,287.5 1411.8,288.4 1424.9,289.0 1436.5,288.1 1448.3,289.3 1460.5,288.1 1472.7,288.4 1484.8,289.6 1497.0,288.1 1509.2,288.1 1521.3,287.8 1533.5,287.8 1545.1,289.6 1557.2,288.4 1569.4,287.8 1581.6,287.8 1593.7,289.0 1605.9,287.8 1618.1,288.4 1629.6,289.0 1641.8,289.9 1653.9,288.4 1666.1,289.0 1678.3,286.0 1690.4,289.6 1702.6,289.0 1714.8,287.8 1726.9,289.0 1739.1,288.4 1751.3,288.4 1763.4,287.8 1774.7,288.4 1786.8,287.8 1799.0,287.5 1811.2,289.6 1823.3,288.4 1835.5,290.9 1847.7,287.5 1859.8,288.4 1872.0,290.9" fill="none" stroke="#5643bd" stroke-width="1.6" stroke-linejoin="round"/><polyline points="1374.1,271.7 1387.5,271.7 1399.7,269.3 1411.8,269.9 1424.9,270.8 1436.5,269.3 1448.3,270.8 1460.5,271.7 1472.7,271.7 1484.8,270.8 1497.0,271.4 1509.2,271.7 1521.3,270.2 1533.5,272.3 1545.1,271.7 1557.2,271.4 1569.4,270.2 1581.6,271.4 1593.7,271.4 1605.9,270.8 1618.1,271.4 1629.6,272.3 1641.8,273.2 1653.9,272.6 1666.1,271.4 1678.3,264.7 1690.4,272.3 1702.6,272.3 1714.8,270.2 1726.9,270.8 1739.1,270.8 1751.3,270.8 1763.4,272.3 1774.7,270.8 1786.8,269.9 1799.0,271.4 1811.2,270.8 1823.3,271.4 1835.5,272.3 1847.7,270.8 1859.8,271.4 1872.0,271.4" fill="none" stroke="#eeb42e" stroke-width="1.6" stroke-linejoin="round"/><polyline points="1374.1,255.6 1375.7,252.5 1382.3,255.6 1388.4,258.6 1399.7,241.3 1411.8,246.4 1424.9,255.6 1436.5,265.3 1448.3,252.5 1460.5,247.1 1472.7,266.2 1484.8,252.5 1497.0,265.3 1509.2,262.6 1521.3,265.3 1533.5,262.6 1545.1,265.3 1557.2,264.1 1569.4,263.2 1581.6,261.7 1593.7,264.7 1605.9,258.6 1618.1,253.1 1629.6,264.7 1641.8,267.7 1653.9,264.1 1666.1,267.1 1678.3,224.5 1690.4,264.7 1702.6,248.6 1714.8,263.2 1726.9,254.1 1739.1,248.0 1751.3,266.2 1763.4,261.7 1774.7,257.1 1786.8,233.7 1799.0,266.2 1811.2,267.1 1823.3,264.7 1835.5,255.0 1847.7,264.1 1859.8,264.1 1872.0,264.1" fill="none" stroke="#0f93e3" stroke-width="1.6" stroke-linejoin="round"/></svg>
<div class="t " style="right:536.8px;top:200.8px;font-size:9.5px;font-weight:400;color:#3d4a52;">6</div>
<div class="t " style="right:536.8px;top:239.1px;font-size:9.5px;font-weight:400;color:#3d4a52;">4</div>
<div class="t " style="right:536.8px;top:277.4px;font-size:9.5px;font-weight:400;color:#3d4a52;">2</div>
<div class="t " style="right:536.8px;top:315.8px;font-size:9.5px;font-weight:400;color:#3d4a52;">0</div>
<div class="t" style="left:1354.5px;width:80px;text-align:center;top:326.0px;font-size:9.5px;color:#3d4a52">Wed 16</div>
<div class="t" style="left:1426.9px;width:80px;text-align:center;top:326.0px;font-size:9.5px;color:#3d4a52">Thu 17</div>
<div class="t" style="left:1499.3px;width:80px;text-align:center;top:326.0px;font-size:9.5px;color:#3d4a52">Fri 18</div>
<div class="t" style="left:1572px;width:80px;text-align:center;top:326.0px;font-size:9.5px;color:#3d4a52">Sat 19</div>
<div class="t" style="left:1644.4px;width:80px;text-align:center;top:326.0px;font-size:9.5px;color:#3d4a52">Mar 20</div>
<div class="t" style="left:1717px;width:80px;text-align:center;top:326.0px;font-size:9.5px;color:#3d4a52">Mon 21</div>
<div class="t" style="left:1789.4px;width:80px;text-align:center;top:326.0px;font-size:9.5px;color:#3d4a52">Tue 22</div>
<div class="t" style="left:1311px;top:260px;width:60px;text-align:center;font-size:9.5px;color:#9aa3a8;transform:rotate(-90deg)">Minutes</div>
<div style="position:absolute;left:1365px;top:350px;width:10px;height:9.5px;background:#0f93e3;border-radius:1px"></div>
<div class="t " style="left:1380.2px;top:349.7px;font-size:10.3px;font-weight:400;color:#3d4a52;">max</div>
<div style="position:absolute;left:1414.3px;top:350px;width:10px;height:9.5px;background:#5643bd;border-radius:1px"></div>
<div class="t " style="left:1429.5px;top:349.7px;font-size:10.3px;font-weight:400;color:#3d4a52;">p50</div>
<div style="position:absolute;left:1461.4px;top:350px;width:10px;height:9.5px;background:#eeb42e;border-radius:1px"></div>
<div class="t " style="left:1476.6px;top:349.7px;font-size:10.3px;font-weight:400;color:#3d4a52;">p95</div>
<div class="t " style="left:169.0px;top:416.3px;font-size:16.4px;font-weight:400;color:#1c2b34;">Job Summary</div>
<div class="t " style="left:175.5px;top:449.8px;font-size:10.6px;font-weight:700;color:#1c2b34;letter-spacing:-0.8px">JOB</div>
<div class="t " style="right:1103.4px;top:449.5px;font-size:10.95px;font-weight:700;color:#1c2b34;">P50 DURATION</div>
<div class="t " style="right:744.8px;top:449.5px;font-size:10.95px;font-weight:700;color:#1c2b34;">P95 DURATION</div>
<div class="t " style="right:386.0px;top:450.0px;font-size:10.4px;font-weight:700;color:#1c2b34;">EXEC TIME %</div>
<svg style="left:1438px;top:449px" width="9" height="10" viewBox="0 0 9 10"><path d="M4.5,0.5 L4.5,9 M1,5.5 L4.5,9 L8,5.5" stroke="#1c2b34" stroke-width="1.3" fill="none"/></svg>
<div class="t " style="right:27.3px;top:449.8px;font-size:10.6px;font-weight:700;color:#1c2b34;">FAILURE %</div>
<div style="position:absolute;left:169px;top:466px;width:1717px;height:1px;background:#dfe3ea"></div>
<div style="position:absolute;left:169px;top:496px;width:1717px;height:1px;background:#dfe3ea"></div>
<div class="t " style="left:175.7px;top:476.8px;font-size:12px;font-weight:700;color:#1c2b34;">sleep</div>
<div class="t " style="left:175.7px;top:505.5px;font-size:12px;font-weight:700;color:#1c2b34;">exit</div>
<div class="t " style="right:1146.8px;top:476.9px;font-size:11.6px;font-weight:400;color:#1c2b34;">1 min 8 s</div>
<div style="position:absolute;left:767.7px;top:476.0px;width:36px;height:11px;background:#dde1ea"></div>
<div style="position:absolute;left:767.7px;top:476.0px;width:36.0px;height:11px;background:#078be5"></div>
<div class="t " style="right:788.1px;top:476.9px;font-size:11.6px;font-weight:400;color:#1c2b34;">2 min 2 s</div>
<div style="position:absolute;left:1126px;top:476.0px;width:36px;height:11px;background:#dde1ea"></div>
<div style="position:absolute;left:1126px;top:476.0px;width:36.0px;height:11px;background:#078be5"></div>
<div class="t " style="right:429.6px;top:476.9px;font-size:11.6px;font-weight:400;color:#1c2b34;">91.8%</div>
<div style="position:absolute;left:1485px;top:476.0px;width:36px;height:11px;background:#dde1ea"></div>
<div style="position:absolute;left:1485px;top:476.0px;width:33.048px;height:11px;background:#078be5"></div>
<div class="t " style="right:71.0px;top:476.9px;font-size:11.6px;font-weight:400;color:#1c2b34;">0.9%</div>
<div style="position:absolute;left:1844px;top:476.0px;width:36px;height:11px;background:#dde1ea"></div>
<div style="position:absolute;left:1844px;top:476.0px;width:0.432px;height:11px;background:#078be5"></div>
<div class="t " style="right:1146.8px;top:505.9px;font-size:11.6px;font-weight:400;color:#1c2b34;">6.09 s</div>
<div style="position:absolute;left:767.7px;top:505.00000000000006px;width:36px;height:11px;background:#dde1ea"></div>
<div style="position:absolute;left:767.7px;top:505.00000000000006px;width:3.96px;height:11px;background:#078be5"></div>
<div class="t " style="right:788.1px;top:505.9px;font-size:11.6px;font-weight:400;color:#1c2b34;">7.79 s</div>
<div style="position:absolute;left:1126px;top:505.00000000000006px;width:36px;height:11px;background:#dde1ea"></div>
<div style="position:absolute;left:1126px;top:505.00000000000006px;width:2.34px;height:11px;background:#078be5"></div>
<div class="t " style="right:429.6px;top:505.9px;font-size:11.6px;font-weight:400;color:#1c2b34;">8.2%</div>
<div style="position:absolute;left:1485px;top:505.00000000000006px;width:36px;height:11px;background:#dde1ea"></div>
<div style="position:absolute;left:1485px;top:505.00000000000006px;width:3.06px;height:11px;background:#078be5"></div>
<div class="t " style="right:71.0px;top:505.9px;font-size:11.6px;font-weight:400;color:#1c2b34;">19.8%</div>
<div style="position:absolute;left:1844px;top:505.00000000000006px;width:36px;height:11px;background:#dde1ea"></div>
<div style="position:absolute;left:1844px;top:505.00000000000006px;width:7.128px;height:11px;background:#078be5"></div>
<div class="t " style="left:173.5px;top:577.0px;font-size:16.4px;font-weight:400;color:#1c2b34;">Pipeline Executions</div>
<div class="t " style="right:25.9px;top:579.5px;font-size:12.2px;font-weight:400;color:#5f6d75;">Showing last 100 pipeline executions</div>
<svg style="left:0;top:0" width="1907" height="800"><line x1="209" y1="743.1" x2="1880" y2="743.1" stroke="#e8e9eb" stroke-width="1"/><line x1="209" y1="717.0" x2="1880" y2="717.0" stroke="#e8e9eb" stroke-width="1"/><line x1="209" y1="690.9" x2="1880" y2="690.9" stroke="#e8e9eb" stroke-width="1"/><line x1="209" y1="664.8" x2="1880" y2="664.8" stroke="#e8e9eb" stroke-width="1"/><line x1="209" y1="638.9" x2="1880" y2="638.9" stroke="#e8e9eb" stroke-width="1"/><rect x="209.40" y="724.98" width="13.3" height="44.22" fill="#80d69a"/><rect x="226.12" y="725.56" width="13.3" height="43.64" fill="#80d69a"/><rect x="242.83" y="713.16" width="13.3" height="56.04" fill="#80d69a"/><rect x="259.55" y="716.91" width="13.3" height="52.29" fill="#80d69a"/><rect x="276.26" y="707.68" width="13.3" height="61.52" fill="#80d69a"/><rect x="292.98" y="684.89" width="13.3" height="84.31" fill="#80d69a"/><rect x="309.70" y="691.53" width="13.3" height="77.67" fill="#ff6470"/><rect x="326.41" y="688.35" width="13.3" height="80.85" fill="#80d69a"/><rect x="343.13" y="689.80" width="13.3" height="79.40" fill="#80d69a"/><rect x="359.84" y="679.12" width="13.3" height="90.08" fill="#80d69a"/><rect x="376.56" y="685.76" width="13.3" height="83.44" fill="#80d69a"/><rect x="393.28" y="684.89" width="13.3" height="84.31" fill="#80d69a"/><rect x="409.99" y="680.57" width="13.3" height="88.63" fill="#80d69a"/><rect x="426.71" y="675.95" width="13.3" height="93.25" fill="#ff6470"/><rect x="443.42" y="658.36" width="13.3" height="110.84" fill="#80d69a"/><rect x="460.14" y="654.89" width="13.3" height="114.31" fill="#80d69a"/><rect x="476.86" y="645.66" width="13.3" height="123.54" fill="#ff6470"/><rect x="493.57" y="644.80" width="13.3" height="124.40" fill="#80d69a"/><rect x="510.29" y="733.35" width="13.3" height="35.85" fill="#ff6470"/><rect x="527.00" y="706.24" width="13.3" height="62.96" fill="#80d69a"/><rect x="543.72" y="726.14" width="13.3" height="43.06" fill="#80d69a"/><rect x="560.44" y="713.74" width="13.3" height="55.46" fill="#ff6470"/><rect x="577.15" y="727.58" width="13.3" height="41.62" fill="#80d69a"/><rect x="593.87" y="723.54" width="13.3" height="45.66" fill="#80d69a"/><rect x="610.58" y="705.37" width="13.3" height="63.83" fill="#80d69a"/><rect x="627.30" y="720.08" width="13.3" height="49.12" fill="#80d69a"/><rect x="644.02" y="683.45" width="13.3" height="85.75" fill="#ff6470"/><rect x="660.73" y="670.18" width="13.3" height="99.02" fill="#80d69a"/><rect x="677.45" y="686.91" width="13.3" height="82.29" fill="#80d69a"/><rect x="694.16" y="670.95" width="13.3" height="98.25" fill="#80d69a"/><rect x="710.88" y="663.46" width="13.3" height="105.74" fill="#80d69a"/><rect x="727.60" y="638.36" width="13.3" height="130.84" fill="#80d69a"/><rect x="744.31" y="669.22" width="13.3" height="99.98" fill="#80d69a"/><rect x="761.03" y="634.04" width="13.3" height="135.16" fill="#80d69a"/><rect x="777.74" y="639.52" width="13.3" height="129.68" fill="#80d69a"/><rect x="794.46" y="643.55" width="13.3" height="125.65" fill="#80d69a"/><rect x="811.18" y="653.07" width="13.3" height="116.13" fill="#80d69a"/><rect x="827.89" y="633.17" width="13.3" height="136.03" fill="#ff6470"/><rect x="844.61" y="719.12" width="13.3" height="50.08" fill="#80d69a"/><rect x="861.32" y="723.45" width="13.3" height="45.75" fill="#80d69a"/><rect x="878.04" y="717.68" width="13.3" height="51.52" fill="#80d69a"/><rect x="894.76" y="702.39" width="13.3" height="66.81" fill="#ff6470"/><rect x="911.47" y="702.97" width="13.3" height="66.23" fill="#80d69a"/><rect x="928.19" y="698.64" width="13.3" height="70.56" fill="#80d69a"/><rect x="944.90" y="724.03" width="13.3" height="45.17" fill="#80d69a"/><rect x="961.62" y="719.41" width="13.3" height="49.79" fill="#80d69a"/><rect x="978.34" y="710.47" width="13.3" height="58.73" fill="#ff6470"/><rect x="995.05" y="698.07" width="13.3" height="71.13" fill="#80d69a"/><rect x="1011.77" y="694.03" width="13.3" height="75.17" fill="#80d69a"/><rect x="1028.48" y="675.86" width="13.3" height="93.34" fill="#ff6470"/><rect x="1045.20" y="674.70" width="13.3" height="94.50" fill="#80d69a"/><rect x="1061.92" y="693.45" width="13.3" height="75.75" fill="#80d69a"/><rect x="1078.63" y="688.84" width="13.3" height="80.36" fill="#80d69a"/><rect x="1095.35" y="665.76" width="13.3" height="103.44" fill="#ff6470"/><rect x="1112.06" y="653.07" width="13.3" height="116.13" fill="#80d69a"/><rect x="1128.78" y="638.65" width="13.3" height="130.55" fill="#ff6470"/><rect x="1145.50" y="659.13" width="13.3" height="110.07" fill="#80d69a"/><rect x="1162.21" y="630.00" width="13.3" height="139.20" fill="#ff6470"/><rect x="1178.93" y="734.12" width="13.3" height="35.08" fill="#ff6470"/><rect x="1195.64" y="716.82" width="13.3" height="52.38" fill="#80d69a"/><rect x="1212.36" y="724.03" width="13.3" height="45.17" fill="#80d69a"/><rect x="1229.08" y="732.82" width="13.3" height="36.38" fill="#80d69a"/><rect x="1245.79" y="708.92" width="13.3" height="60.28" fill="#80d69a"/><rect x="1262.51" y="696.98" width="13.3" height="72.22" fill="#80d69a"/><rect x="1279.22" y="704.36" width="13.3" height="64.84" fill="#80d69a"/><rect x="1295.94" y="661.14" width="13.3" height="108.06" fill="#80d69a"/><rect x="1312.66" y="696.63" width="13.3" height="72.57" fill="#80d69a"/><rect x="1329.37" y="683.98" width="13.3" height="85.22" fill="#80d69a"/><rect x="1346.09" y="683.27" width="13.3" height="85.93" fill="#80d69a"/><rect x="1362.80" y="681.17" width="13.3" height="88.03" fill="#80d69a"/><rect x="1379.52" y="681.17" width="13.3" height="88.03" fill="#80d69a"/><rect x="1396.24" y="681.87" width="13.3" height="87.33" fill="#ff6470"/><rect x="1412.95" y="683.98" width="13.3" height="85.22" fill="#80d69a"/><rect x="1429.67" y="655.17" width="13.3" height="114.03" fill="#80d69a"/><rect x="1446.38" y="647.08" width="13.3" height="122.12" fill="#80d69a"/><rect x="1463.10" y="640.41" width="13.3" height="128.79" fill="#80d69a"/><rect x="1479.82" y="644.98" width="13.3" height="124.22" fill="#ff6470"/><rect x="1496.53" y="634.08" width="13.3" height="135.12" fill="#80d69a"/><rect x="1513.25" y="736.33" width="13.3" height="32.87" fill="#80d69a"/><rect x="1529.96" y="728.60" width="13.3" height="40.60" fill="#80d69a"/><rect x="1546.68" y="725.79" width="13.3" height="43.41" fill="#80d69a"/><rect x="1563.40" y="703.30" width="13.3" height="65.90" fill="#80d69a"/><rect x="1580.11" y="697.68" width="13.3" height="71.52" fill="#80d69a"/><rect x="1596.83" y="675.54" width="13.3" height="93.66" fill="#ff6470"/><rect x="1613.54" y="713.84" width="13.3" height="55.36" fill="#80d69a"/><rect x="1630.26" y="709.28" width="13.3" height="59.92" fill="#80d69a"/><rect x="1646.98" y="678.36" width="13.3" height="90.84" fill="#80d69a"/><rect x="1663.69" y="652.00" width="13.3" height="117.20" fill="#ff6470"/><rect x="1680.41" y="686.09" width="13.3" height="83.11" fill="#80d69a"/><rect x="1697.12" y="650.60" width="13.3" height="118.60" fill="#80d69a"/><rect x="1713.84" y="675.54" width="13.3" height="93.66" fill="#80d69a"/><rect x="1730.56" y="664.30" width="13.3" height="104.90" fill="#ff6470"/><rect x="1747.27" y="680.46" width="13.3" height="88.74" fill="#80d69a"/><rect x="1763.99" y="657.98" width="13.3" height="111.22" fill="#ff6470"/><rect x="1780.70" y="666.06" width="13.3" height="103.14" fill="#80d69a"/><rect x="1797.42" y="653.76" width="13.3" height="115.44" fill="#80d69a"/><rect x="1814.14" y="666.06" width="13.3" height="103.14" fill="#80d69a"/><rect x="1830.85" y="634.08" width="13.3" height="135.12" fill="#80d69a"/><rect x="1847.57" y="732.12" width="13.3" height="37.08" fill="#80d69a"/><rect x="1864.28" y="713.49" width="13.3" height="55.71" fill="#80d69a"/><line x1="209" y1="769.5" x2="1880" y2="769.5" stroke="#c9cdd0" stroke-width="1"/></svg>
<div class="t " style="right:1700.5px;top:765.4px;font-size:9.3px;font-weight:400;color:#3d4a52;">0 min</div>
<div class="t " style="right:1700.5px;top:739.3px;font-size:9.3px;font-weight:400;color:#3d4a52;">0.5 min</div>
<div class="t " style="right:1700.5px;top:713.2px;font-size:9.3px;font-weight:400;color:#3d4a52;">1 min</div>
<div class="t " style="right:1700.5px;top:687.1px;font-size:9.3px;font-weight:400;color:#3d4a52;">1.5 min</div>
<div class="t " style="right:1700.5px;top:661.0px;font-size:9.3px;font-weight:400;color:#3d4a52;">2 min</div>
<div class="t " style="right:1700.5px;top:635.1px;font-size:9.3px;font-weight:400;color:#3d4a52;">2.5 min</div>
<div class="t " style="left:209.5px;top:776.3px;font-size:10px;font-weight:400;color:#8a949a;">Mar 22, 4:33 PM</div>
<div class="t " style="right:26.5px;top:776.3px;font-size:10px;font-weight:400;color:#8a949a;">Mar 22, 5:24 PM</div>
<div style="position:absolute;left:168px;top:806px;width:1682px;height:32px;background:#fff;border:1px solid #c3cad5;border-radius:4px"></div>
<svg style="left:177px;top:815.5px" width="13" height="13" viewBox="0 0 13 13"><circle cx="5.5" cy="5.5" r="4.5" fill="none" stroke="#5f6d75" stroke-width="1.2"/><path d="M8.7,8.7 L12.3,12.3" stroke="#5f6d75" stroke-width="1.3"/></svg>
<div class="t " style="left:199.8px;top:816.0px;font-size:12.2px;font-weight:400;color:#7c878e;">Search pipeline executions</div>
<svg style="left:1860px;top:815px" width="18" height="13" viewBox="0 0 18 13"><path d="M5,2.5 L1,6.5 L5,10.5 M13,2.5 L17,6.5 L13,10.5 M10.5,0.5 L7.5,12.5" stroke="#3d4a52" stroke-width="1.3" fill="none"/></svg>
<div style="position:absolute;left:169px;top:845px;width:210px;height:25px;background:#fff;border:1px solid #c3cad5;border-radius:3px"></div>
<svg style="left:177px;top:851px" width="13" height="13" viewBox="0 0 13 13"><circle cx="5.5" cy="5.5" r="4.5" fill="none" stroke="#5f6d75" stroke-width="1.2"/><path d="M8.7,8.7 L12.3,12.3" stroke="#5f6d75" stroke-width="1.3"/></svg>
<div class="t " style="left:198.5px;top:852.5px;font-size:12.2px;font-weight:400;color:#7c878e;">Search facets</div>
<div style="position:absolute;left:169px;top:878px;width:210px;height:21px;background:#dde2eb;border-radius:3px"></div>
<svg style="left:177px;top:885px" width="9" height="6"><path d="M0.7,0.7 L4.5,4.8 L8.3,0.7" stroke="#5f6d75" stroke-width="1.2" fill="none"/></svg>
<div class="t " style="left:192.5px;top:884.1px;font-size:10.2px;font-weight:400;color:#5f6d75;">CI</div>
<svg style="left:178.5px;top:915px" width="11" height="7"><path d="M0.7,0.7 L5.5,5.8 L10.3,0.7" stroke="#3d4a52" stroke-width="1.2" fill="none"/></svg>
<div class="t " style="left:194.3px;top:912.8px;font-size:12px;font-weight:700;color:#1c2b34;">CI Status</div>
<svg style="left:178.8px;top:940.2px" width="12.5" height="12.5" viewBox="0 0 12 12"><rect x="0" y="0" width="12" height="12" rx="1.5" fill="#0b5cbe"/><path d="M2.6,6.2 L5,8.5 L9.5,3.6" stroke="#fff" stroke-width="1.6" fill="none"/></svg>
<div class="t " style="left:197.7px;top:940.6px;font-size:12.3px;font-weight:400;color:#1c2b34;">blocked</div>
<div class="t " style="right:1538.7px;top:941.7px;font-size:11px;font-weight:400;color:#5f6d75;">178</div>
<svg style="left:178.8px;top:963.2px" width="12.5" height="12.5" viewBox="0 0 12 12"><rect x="0" y="0" width="12" height="12" rx="1.5" fill="#0b5cbe"/><path d="M2.6,6.2 L5,8.5 L9.5,3.6" stroke="#fff" stroke-width="1.6" fill="none"/></svg>
<div style="position:absolute;left:198px;top:962px;width:4px;height:15px;background:#1bba5d;border-radius:2px"></div>
<div class="t " style="left:206.0px;top:963.6px;font-size:12.3px;font-weight:400;color:#1c2b34;">Success</div>
<div class="t " style="right:1538.7px;top:964.7px;font-size:11px;font-weight:400;color:#5f6d75;">51.9k</div>
<svg style="left:178.8px;top:986.2px" width="12.5" height="12.5" viewBox="0 0 12 12"><rect x="0" y="0" width="12" height="12" rx="1.5" fill="#0b5cbe"/><path d="M2.6,6.2 L5,8.5 L9.5,3.6" stroke="#fff" stroke-width="1.6" fill="none"/></svg>
<div style="position:absolute;left:198px;top:985px;width:4px;height:15px;background:#f02e48;border-radius:2px"></div>
<div class="t " style="left:206.0px;top:987.6px;font-size:12.3px;font-weight:400;color:#1c2b34;">Error</div>
<div class="t " style="right:1538.7px;top:988.7px;font-size:11px;font-weight:400;color:#5f6d75;">8.32k</div>
<div style="position:absolute;left:169px;top:1019px;width:210px;height:1px;background:#dfe3ea"></div>
<svg style="left:178.5px;top:1033px" width="11" height="7"><path d="M0.7,0.7 L5.5,5.8 L10.3,0.7" stroke="#3d4a52" stroke-width="1.2" fill="none"/></svg>
<div class="t " style="left:194.5px;top:1030.4px;font-size:12px;font-weight:700;color:#1c2b34;">Duration</div>
<div class="t " style="left:177.5px;top:1061.4px;font-size:11.3px;font-weight:400;color:#5f6d75;">Min</div>
<div style="position:absolute;left:203px;top:1056px;width:63px;height:21px;background:#fff;border:1px solid #b9c1cc;border-radius:3px"></div>
<div class="t " style="right:1647.5px;top:1061.4px;font-size:11.3px;font-weight:400;color:#7c878e;">0ns</div>
<div class="t " style="left:281.5px;top:1061.4px;font-size:11.3px;font-weight:400;color:#5f6d75;">Max</div>
<div style="position:absolute;left:309px;top:1056px;width:63px;height:21px;background:#fff;border:1px solid #b9c1cc;border-radius:3px"></div>
<div class="t " style="right:1541.0px;top:1061.4px;font-size:11.3px;font-weight:400;color:#7c878e;">4.95min</div>
<div style="position:absolute;left:181px;top:1092px;width:186px;height:2px;background:#0b5cbe"></div>
<div style="position:absolute;left:174.8px;top:1086.5px;width:13px;height:13px;background:#0b5cbe;border-radius:50%"></div>
<div style="position:absolute;left:359.8px;top:1086.5px;width:13px;height:13px;background:#0b5cbe;border-radius:50%"></div>
<div style="position:absolute;left:169px;top:1108px;width:210px;height:1px;background:#dfe3ea"></div>
<svg style="left:180.5px;top:1118.5px" width="7" height="11"><path d="M0.7,0.7 L5.8,5.5 L0.7,10.3" stroke="#3d4a52" stroke-width="1.2" fill="none"/></svg>
<div class="t " style="left:194.5px;top:1118.8px;font-size:12px;font-weight:700;color:#1c2b34;">Pipeline ID</div>
<div style="position:absolute;left:169px;top:1141px;width:210px;height:1px;background:#dfe3ea"></div>
<svg style="left:180.5px;top:1152px" width="7" height="11"><path d="M0.7,0.7 L5.8,5.5 L0.7,10.3" stroke="#3d4a52" stroke-width="1.2" fill="none"/></svg>
<div class="t " style="left:194.5px;top:1152.2px;font-size:12px;font-weight:700;color:#1c2b34;">CI Provider</div>
<div style="position:absolute;left:169px;top:1174px;width:210px;height:1px;background:#dfe3ea"></div>
<svg style="left:180.5px;top:1185.5px" width="7" height="11"><path d="M0.7,0.7 L5.8,5.5 L0.7,10.3" stroke="#3d4a52" stroke-width="1.2" fill="none"/></svg>
<div class="t " style="left:194.5px;top:1185.1px;font-size:12.4px;font-weight:700;color:#1c2b34;">Manually Triggered</div>
<div style="position:absolute;left:169px;top:1208px;width:210px;height:1px;background:#dfe3ea"></div>
<svg style="left:180.5px;top:1219px" width="7" height="11"><path d="M0.7,0.7 L5.8,5.5 L0.7,10.3" stroke="#3d4a52" stroke-width="1.2" fill="none"/></svg>
<div class="t " style="left:194.5px;top:1218.8px;font-size:12px;font-weight:700;color:#1c2b34;">Node Labels</div>
<svg style="left:405px;top:851px" width="13" height="13" viewBox="0 0 13 13"><rect x="0.6" y="0.6" width="11.8" height="11.8" fill="none" stroke="#0a60b9" stroke-width="1.2"/><path d="M2.5,1 L2.5,12 M4,1 L4,12" stroke="#0a60b9" stroke-width="0.8" stroke-dasharray="1 1"/><path d="M9.5,3.5 L6.5,6.5 L9.5,9.5" stroke="#0a60b9" stroke-width="1.2" fill="none"/></svg>
<div class="t " style="left:423.5px;top:851.6px;font-size:12.3px;font-weight:400;color:#0a60b9;">Hide Controls</div>
<div style="position:absolute;left:513px;top:850px;width:1px;height:15px;background:#d5dae2"></div>
<div style="position:absolute;left:529px;top:845px;width:176px;height:25px;background:#fff;border:1px solid #b9c1cc;border-radius:3px"></div>
<div style="position:absolute;left:529px;top:845px;width:63px;height:25px;background:#0b5cbe;border-radius:3px 0 0 3px"></div>
<div style="position:absolute;left:628px;top:846px;width:1px;height:23px;background:#c3cad5"></div>
<div class="t " style="left:539.2px;top:851.7px;font-size:12.2px;font-weight:400;color:#fff;">Pipeline</div>
<div class="t " style="left:601.0px;top:851.7px;font-size:12.2px;font-weight:400;color:#1c2b34;">Job</div>
<div class="t " style="left:638.5px;top:851.7px;font-size:12.2px;font-weight:400;color:#1c2b34;">Command</div>
<div class="t " style="left:720.3px;top:852.3px;font-size:12px;font-weight:700;color:#1c2b34;">20,130 pipeline executions found</div>
<div class="t " style="left:1602.6px;top:853.0px;font-size:13.5px;font-weight:400;color:#0a60b9;-webkit-text-stroke:0.3px #0a60b9">View in Pipeline Executions</div>
<svg style="left:1771px;top:852px" width="15" height="14" viewBox="0 0 15 14"><path d="M6,1.5 L1,1.5 L1,13 L12.5,13 L12.5,8" stroke="#0a60b9" stroke-width="1.5" fill="none"/><path d="M7,7.5 L13.5,1 M8.5,1 L13.5,1 L13.5,6" stroke="#0a60b9" stroke-width="1.5" fill="none"/></svg>
<div style="position:absolute;left:1802px;top:845px;width:83px;height:25px;background:#fff;border:1px solid #b9c1cc;border-radius:3px"></div>
<svg style="left:1813px;top:851px" width="13" height="13" viewBox="0 0 13 13"><g fill="#3d4a52"><circle cx="6.5" cy="6.5" r="4.3"/><rect x="5.3" y="0" width="2.4" height="13" rx="0.5"/><rect x="0" y="5.3" width="13" height="2.4" rx="0.5"/><rect x="5.3" y="0" width="2.4" height="13" rx="0.5" transform="rotate(45 6.5 6.5)"/><rect x="5.3" y="0" width="2.4" height="13" rx="0.5" transform="rotate(-45 6.5 6.5)"/></g><circle cx="6.5" cy="6.5" r="1.8" fill="#fff"/></svg>
<div class="t " style="left:1832.0px;top:852.1px;font-size:12.3px;font-weight:400;color:#1c2b34;">Options</div>
<div style="position:absolute;left:394px;top:878px;width:1491px;height:360px;background:#fff;border:1px solid #dfe3ea;border-radius:3px"></div>
<svg style="left:420px;top:886px" width="9" height="10" viewBox="0 0 9 10"><path d="M4.5,0.5 L4.5,9 M1,5.5 L4.5,9 L8,5.5" stroke="#1c2b34" stroke-width="1.3" fill="none"/></svg>
<div class="t " style="left:435.8px;top:886.1px;font-size:10.8px;font-weight:700;color:#1c2b34;">DATE</div>
<div class="t " style="left:545.5px;top:886.1px;font-size:10.8px;font-weight:700;color:#1c2b34;">PIPELINE ID</div>
<div class="t " style="left:781.1px;top:886.1px;font-size:10.8px;font-weight:700;color:#1c2b34;">DURATION</div>
<div class="t " style="left:863.0px;top:886.1px;font-size:10.8px;font-weight:700;color:#1c2b34;">QUEUE TIME</div>
<div class="t " style="left:942.0px;top:886.1px;font-size:10.8px;font-weight:700;color:#1c2b34;">NODE NAME</div>
<div style="position:absolute;left:396px;top:904px;width:1488px;height:1px;background:#dfe3ea"></div>
<div style="position:absolute;left:402px;top:916.5px;width:4px;height:13.5px;background:#1bba5d;border-radius:2px"></div>
<div class="t " style="left:417.6px;top:916.9px;font-size:11.7px;font-weight:400;color:#1c2b34;">Mar 22 17:25:41.839</div>
<div class="t " style="left:551.3px;top:917.3px;font-size:11px;font-weight:400;color:#0a60b9;">6239e9db4bfc80541f1d0cde</div>
<div class="t " style="right:1074.5px;top:914.6px;font-size:11.8px;font-weight:400;color:#1c2b34;">2 min 21 s</div>
<div style="position:absolute;left:779px;top:927.5px;width:54px;height:4.6px;background:#dde1ea"></div>
<div style="position:absolute;left:779px;top:927.5px;width:25.636363636363637px;height:4.6px;background:#078be5"></div>
<div style="position:absolute;left:396px;top:939.0px;width:1488px;height:1px;background:#dfe3ea"></div>
<div style="position:absolute;left:402px;top:951.6px;width:4px;height:13.5px;background:#1bba5d;border-radius:2px"></div>
<div class="t " style="left:417.6px;top:952.0px;font-size:11.7px;font-weight:400;color:#1c2b34;">Mar 22 17:25:34.420</div>
<div class="t " style="left:551.3px;top:952.4px;font-size:11px;font-weight:400;color:#0a60b9;">6239e9da01604a32521d36a5</div>
<div class="t " style="right:1074.5px;top:949.7px;font-size:11.8px;font-weight:400;color:#1c2b34;">2 min 12 s</div>
<div style="position:absolute;left:779px;top:962.6px;width:54px;height:4.6px;background:#dde1ea"></div>
<div style="position:absolute;left:779px;top:962.6px;width:24.0px;height:4.6px;background:#078be5"></div>
<div style="position:absolute;left:396px;top:974.1px;width:1488px;height:1px;background:#dfe3ea"></div>
<div style="position:absolute;left:402px;top:986.7px;width:4px;height:13.5px;background:#1bba5d;border-radius:2px"></div>
<div class="t " style="left:417.6px;top:987.1px;font-size:11.7px;font-weight:400;color:#1c2b34;">Mar 22 17:25:33.707</div>
<div class="t " style="left:551.3px;top:987.5px;font-size:11px;font-weight:400;color:#0a60b9;">6239e9d701604a35c61d369e</div>
<div class="t " style="right:1074.5px;top:984.8px;font-size:11.8px;font-weight:400;color:#1c2b34;">2 min 13 s</div>
<div style="position:absolute;left:779px;top:997.7px;width:54px;height:4.6px;background:#dde1ea"></div>
<div style="position:absolute;left:779px;top:997.7px;width:24.181818181818183px;height:4.6px;background:#078be5"></div>
<div style="position:absolute;left:396px;top:1009.2px;width:1488px;height:1px;background:#dfe3ea"></div>
<div style="position:absolute;left:402px;top:1021.8px;width:4px;height:13.5px;background:#1bba5d;border-radius:2px"></div>
<div class="t " style="left:417.6px;top:1022.2px;font-size:11.7px;font-weight:400;color:#1c2b34;">Mar 22 17:25:31.733</div>
<div class="t " style="left:551.3px;top:1022.6px;font-size:11px;font-weight:400;color:#0a60b9;">6239e9c73cfc88a87d933186</div>
<div class="t " style="right:1074.5px;top:1019.9px;font-size:11.8px;font-weight:400;color:#1c2b34;">2 min 26 s</div>
<div style="position:absolute;left:779px;top:1032.8px;width:54px;height:4.6px;background:#dde1ea"></div>
<div style="position:absolute;left:779px;top:1032.8px;width:26.545454545454547px;height:4.6px;background:#078be5"></div>
<div style="position:absolute;left:396px;top:1044.3px;width:1488px;height:1px;background:#dfe3ea"></div>
<div style="position:absolute;left:402px;top:1056.9px;width:4px;height:13.5px;background:#1bba5d;border-radius:2px"></div>
<div class="t " style="left:417.6px;top:1057.3px;font-size:11.7px;font-weight:400;color:#1c2b34;">Mar 22 17:25:22.472</div>
<div class="t " style="left:551.3px;top:1057.7px;font-size:11px;font-weight:400;color:#0a60b9;">6239e9dbac39017542e3edb1</div>
<div class="t " style="right:1074.5px;top:1055.0px;font-size:11.8px;font-weight:400;color:#1c2b34;">2 min 2 s</div>
<div style="position:absolute;left:779px;top:1067.9px;width:54px;height:4.6px;background:#dde1ea"></div>
<div style="position:absolute;left:779px;top:1067.9px;width:22.181818181818183px;height:4.6px;background:#078be5"></div>
<div style="position:absolute;left:396px;top:1079.4px;width:1488px;height:1px;background:#dfe3ea"></div>
<div style="position:absolute;left:402px;top:1092.0px;width:4px;height:13.5px;background:#f02e48;border-radius:2px"></div>
<div class="t " style="left:417.6px;top:1092.4px;font-size:11.7px;font-weight:400;color:#1c2b34;">Mar 22 17:25:19.444</div>
<div class="t " style="left:551.3px;top:1092.8px;font-size:11px;font-weight:400;color:#0a60b9;">6239e9c558875d27153a4b49</div>
<div class="t " style="right:1074.5px;top:1090.1px;font-size:11.8px;font-weight:400;color:#1c2b34;">2 min 21 s</div>
<div style="position:absolute;left:779px;top:1103.0px;width:54px;height:4.6px;background:#dde1ea"></div>
<div style="position:absolute;left:779px;top:1103.0px;width:25.636363636363637px;height:4.6px;background:#078be5"></div>
<div style="position:absolute;left:396px;top:1114.5px;width:1488px;height:1px;background:#dfe3ea"></div>
<div style="position:absolute;left:402px;top:1127.1px;width:4px;height:13.5px;background:#1bba5d;border-radius:2px"></div>
<div class="t " style="left:417.6px;top:1127.5px;font-size:11.7px;font-weight:400;color:#1c2b34;">Mar 22 17:25:17.524</div>
<div class="t " style="left:551.3px;top:1127.9px;font-size:11px;font-weight:400;color:#0a60b9;">6239e9d57284c3ed1d08e6ee</div>
<div class="t " style="right:1074.5px;top:1125.2px;font-size:11.8px;font-weight:400;color:#1c2b34;">2 min 5 s</div>
<div style="position:absolute;left:779px;top:1138.1px;width:54px;height:4.6px;background:#dde1ea"></div>
<div style="position:absolute;left:779px;top:1138.1px;width:22.727272727272727px;height:4.6px;background:#078be5"></div>
<div style="position:absolute;left:396px;top:1149.6px;width:1488px;height:1px;background:#dfe3ea"></div>
<div style="position:absolute;left:402px;top:1162.2px;width:4px;height:13.5px;background:#1bba5d;border-radius:2px"></div>
<div class="t " style="left:417.6px;top:1162.6px;font-size:11.7px;font-weight:400;color:#1c2b34;">Mar 22 17:25:15.563</div>
<div class="t " style="left:551.3px;top:1163.0px;font-size:11px;font-weight:400;color:#0a60b9;">6239e9dad4607ec520ea5f53</div>
<div class="t " style="right:1074.5px;top:1160.3px;font-size:11.8px;font-weight:400;color:#1c2b34;">1 min 57 s</div>
<div style="position:absolute;left:779px;top:1173.2px;width:54px;height:4.6px;background:#dde1ea"></div>
<div style="position:absolute;left:779px;top:1173.2px;width:21.272727272727273px;height:4.6px;background:#078be5"></div>
<div style="position:absolute;left:396px;top:1184.7px;width:1488px;height:1px;background:#dfe3ea"></div>
<div style="position:absolute;left:402px;top:1197.3px;width:4px;height:13.5px;background:#1bba5d;border-radius:2px"></div>
<div class="t " style="left:417.6px;top:1197.7px;font-size:11.7px;font-weight:400;color:#1c2b34;">Mar 22 17:25:15.064</div>
<div class="t " style="left:551.3px;top:1198.1px;font-size:11px;font-weight:400;color:#0a60b9;">6239e9c6e1293b6547b6fcd2</div>
<div class="t " style="right:1074.5px;top:1195.4px;font-size:11.8px;font-weight:400;color:#1c2b34;">2 min 10 s</div>
<div style="position:absolute;left:779px;top:1208.3px;width:54px;height:4.6px;background:#dde1ea"></div>
<div style="position:absolute;left:779px;top:1208.3px;width:23.636363636363637px;height:4.6px;background:#078be5"></div>
<div style="position:absolute;left:396px;top:1219.8px;width:1488px;height:1px;background:#dfe3ea"></div>
<div style="position:absolute;left:1899px;top:0px;width:8px;height:1224px;background:#f6f6f6;border-left:1px solid #dcdcdc"></div>
<div style="position:absolute;left:1902px;top:-6px;width:8px;height:284.5px;background:#7b7b7b;border-radius:5px"></div>
<div style="position:absolute;left:1902px;top:618.6px;width:8px;height:281px;background:#7b7b7b;border-radius:5px"></div>
</body></html>
